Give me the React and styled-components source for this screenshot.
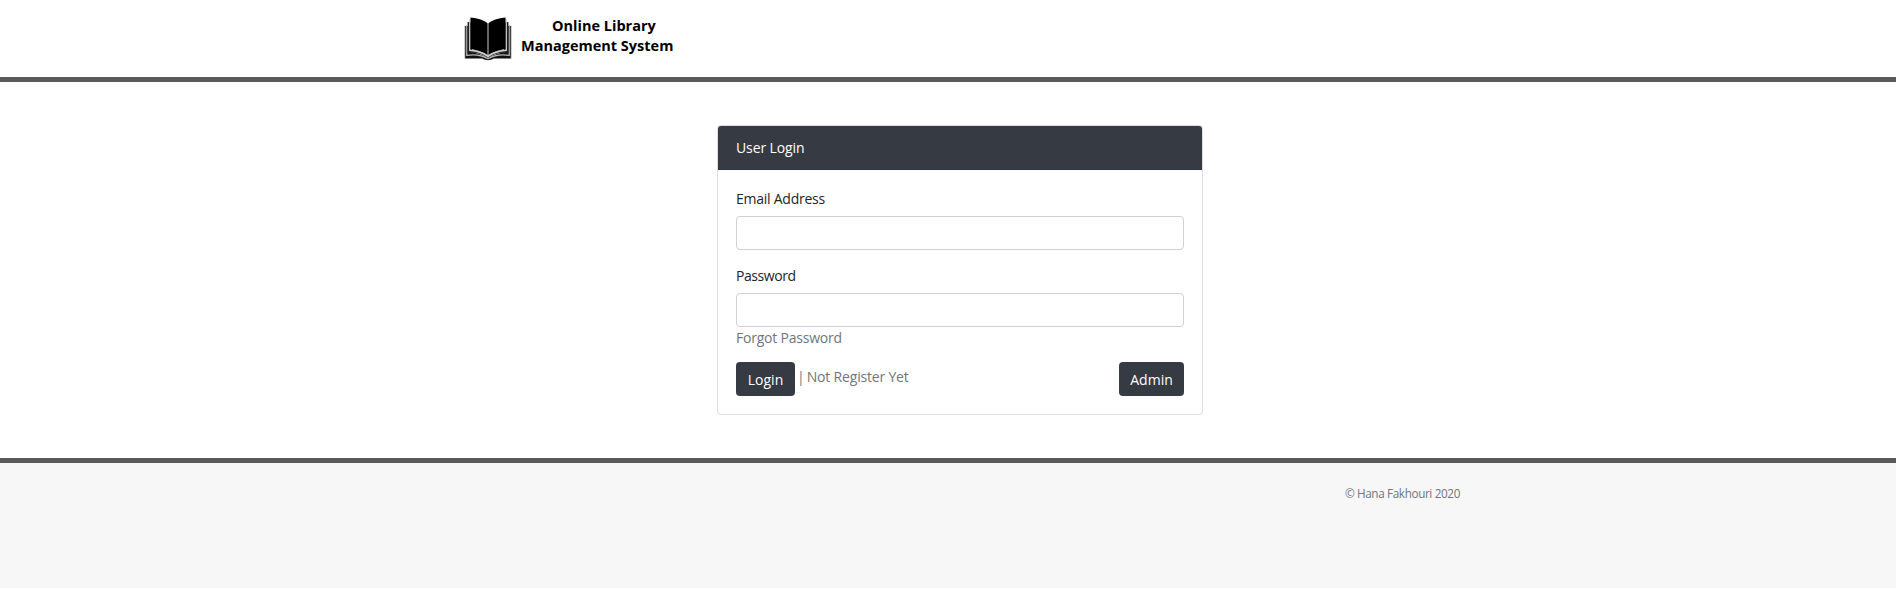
import React from "react";
import styled, { createGlobalStyle } from "styled-components";

const GlobalStyle = createGlobalStyle`
  * { box-sizing: border-box; }
  body {
    margin: 0;
    background: #fff;
    color: #212529;
    font-family: "Segoe UI", "Open Sans", "Noto Sans", sans-serif;
    font-size: 14px;
    line-height: 21px;
  }
`;

const Page = styled.div`
  display: flex;
  flex-direction: column;
  height: 588px;
`;

const Header = styled.header`
  height: 82px;
  border-bottom: 5px solid #5a5a5a;
`;

const HeaderInner = styled.div`
  display: flex;
  width: 970px;
  margin: 0 auto;
  padding: 12px 0 0 1px;
`;

const Brand = styled.div`
  display: flex;
  gap: 9px;
`;

const BookIcon = styled.svg`
  width: 48px;
  height: 44px;
  margin-top: 5px;
`;

const BrandName = styled.div`
  width: 152px;
  padding-top: 4px;
  color: #000;
  font-size: 14.5px;
  font-weight: 700;
  line-height: 20px;
`;

const BrandLine = styled.div`
  margin-left: ${(p) => p.$indent || 0}px;
  white-space: nowrap;
`;

const Main = styled.main`
  display: flex;
  justify-content: center;
  align-items: flex-start;
  height: 376px;
  padding: 43px 0 0 24px;
`;

const Card = styled.section`
  width: 486px;
  height: 290px;
  border: 1px solid #dfdfdf;
  border-radius: 4px;
`;

const CardHeader = styled.div`
  height: 44px;
  padding: 11px 18px;
  border-bottom: 1px solid #2f333a;
  border-radius: 3px 3px 0 0;
  background: #363a42;
  color: #fff;
`;

const CardBody = styled.form`
  padding: 18px 18px 0;
`;

const Text = styled.span`
  letter-spacing: ${(p) => p.$spacing || 0}px;
  white-space: nowrap;
`;

const Field = styled.div`
  margin-bottom: ${(p) => p.$gap}px;
`;

const Label = styled.label`
  display: block;
  height: 21px;
  margin-bottom: 7px;
`;

const Input = styled.input`
  display: block;
  width: 100%;
  height: 34px;
  padding: 6px 12px;
  border: 1px solid #ced0d6;
  border-radius: 4px;
  background: #fff;
  font: inherit;
  outline: none;
`;

const Link = styled.a`
  color: #6f7680;
  text-decoration: none;
`;

const Actions = styled.div`
  display: flex;
  align-items: flex-start;
  margin-top: 14px;
`;

const Button = styled.button`
  width: ${(p) => p.$width}px;
  height: 34px;
  margin-left: ${(p) => (p.$end ? "auto" : 0)};
  padding: 1px 0 0;
  border: 0;
  border-radius: 4px;
  background: #363a42;
  color: #fff;
  font: inherit;
  line-height: 21px;
`;

const Register = styled.div`
  display: flex;
  gap: 2px;
  margin: 4px 0 0 2px;
  color: #6f7680;
`;

const Footer = styled.footer`
  flex: 1;
  border-top: 5px solid #5a5a5a;
  background: #f7f7f7;
`;

const Copyright = styled.p`
  width: 1024px;
  margin: 0 auto;
  padding-top: 20px;
  color: #6f7680;
  font-size: 11.7px;
  line-height: 21px;
  text-align: right;
`;

const Book = () => (
  <BookIcon viewBox="0 0 48 44" aria-label="Open book">
    <path d="M1 9H6V35Q15 36 24 41Q33 36 42 35V9H47V41.5H30Q24 45 18 41.5H1Z" fill="#111" />
    <path d="M0.8 8.5V41.5M47.2 8.5V41.5" stroke="#bbb" strokeWidth="1" />
    <path d="M2.8 8V38.3Q15 36.4 24 41.8Q33 36.4 45.2 38.3V8" fill="none" stroke="#bbb" strokeWidth="1.2" />
    <path d="M3.6 5H8V33Q18 34 24 40Q30 34 40 33V5H44.4V36Q32 35 24 41Q16 35 3.6 36Z" fill="#222" />
    <path d="M5.8 2V33.3Q17 34.2 24 39.5Q31 34.2 42.2 33.3V2" fill="none" stroke="#d2d2d2" strokeWidth="1.4" />
    <path d="M6.5 0.5Q18 1.5 24 6.5V38.3Q17 33.3 6.5 32Z" fill="#000" />
    <path d="M41.5 0.5Q30 1.5 24 6.5V38.3Q31 33.3 41.5 32Z" fill="#000" />
    <path d="M24 6V38.5" stroke="#aaa" strokeWidth="1.2" />
  </BookIcon>
);

export default function App() {
  return (
    <>
      <GlobalStyle />
      <Page>
        <Header>
          <HeaderInner>
            <Brand>
              <Book />
              <BrandName>
                <BrandLine $indent={31}>Online Library</BrandLine>
                <BrandLine>Management System</BrandLine>
              </BrandName>
            </Brand>
          </HeaderInner>
        </Header>
        <Main>
          <Card>
            <CardHeader><Text $spacing={-0.12}>User Login</Text></CardHeader>
            <CardBody>
              <Field $gap={15}>
                <Label htmlFor="email"><Text $spacing={-0.25}>Email Address</Text></Label>
                <Input id="email" type="text" />
              </Field>
              <Field $gap={0}>
                <Label htmlFor="password"><Text $spacing={-0.42}>Password</Text></Label>
                <Input id="password" type="password" />
                <Link><Text $spacing={-0.22}>Forgot Password</Text></Link>
              </Field>
              <Actions>
                <Button type="button" $width={59}><Text>Login</Text></Button>
                <Register>
                  <Text>|</Text>
                  <Link><Text $spacing={-0.18}>Not Register Yet</Text></Link>
                </Register>
                <Button type="button" $width={65} $end><Text>Admin</Text></Button>
              </Actions>
            </CardBody>
          </Card>
        </Main>
        <Footer>
          <Copyright><Text $spacing={-0.35}>© Hana Fakhouri 2020</Text></Copyright>
        </Footer>
      </Page>
    </>
  );
}
